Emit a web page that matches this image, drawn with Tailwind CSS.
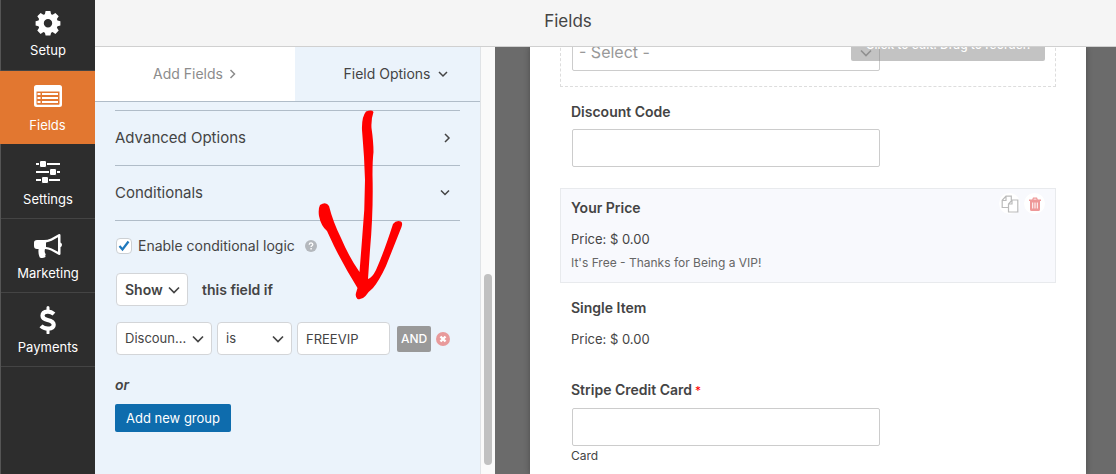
<!DOCTYPE html>
<html lang="en">
<head>
<meta charset="utf-8">
<meta name="viewport" content="width=device-width, initial-scale=1">
<title>Form Builder</title>
<script src="https://cdn.jsdelivr.net/npm/@tailwindcss/browser@4"></script>
</head>
<body class="flex h-screen overflow-hidden bg-[#f5f5f5] font-[Inter,sans-serif] text-sm text-[#444444]">

<!-- Main navigation -->
<nav class="flex w-[95px] shrink-0 flex-col border-l border-[#555555] bg-[#2d2d2d] text-[13px] leading-5 text-white" aria-label="Builder">
  <a href="#" class="flex h-[71px] flex-col items-center justify-end gap-[3px] border-b border-[#444444] pb-[10px]">
    <svg class="size-7" viewBox="0 0 28 28" fill="currentColor" aria-hidden="true"><path fill-rule="evenodd" d="M11.600 2h4.800l.7 3.200 1.500.6 2.800-1.800 3.300 3.300-1.800 2.800.6 1.500 2.900.7v4.300l-2.900.7-.6 1.500 1.800 2.800-3.300 3.300-2.800-1.800-1.500.6-.7 2.800h-4.800l-.7-2.800-1.500-.6-2.800 1.800-3.300-3.300 1.800-2.800-.6-1.500-2.900-.7v-4.300l2.900-.7.6-1.500-1.800-2.800 3.300-3.300 2.800 1.800 1.500-.6zM14 10a4.200 4.200 0 1 0 0 8.400a4.200 4.200 0 0 0 0-8.400z"/></svg>
    Setup
  </a>
  <a href="#" aria-current="page" class="-ml-px flex h-[73px] flex-col items-center justify-end gap-[3px] bg-[#e27730] pb-[9px]">
    <svg class="size-8" viewBox="0 0 32 32" fill="currentColor" aria-hidden="true"><path fill-rule="evenodd" d="M4.500 5h23q2.500 0 2.500 2.500v17q0 2.500-2.500 2.500h-23Q2 27 2 24.500v-17Q2 5 4.500 5zM4.500 11.500v12.500q0 .8.8.8h21.400q.8 0 .8-.8V11.500z"/><path d="M5.500 13h3v2h-3zM10 13h16v2H10zM5.500 17h3v2h-3zM10 17h16v2H10zM5.500 21h3v2h-3zM10 21h16v2H10z"/></svg>
    Fields
  </a>
  <a href="#" class="flex h-[75px] flex-col items-center justify-end gap-[3px] border-b border-[#444444] pb-[9px]">
    <svg class="size-7" viewBox="0 0 28 28" fill="currentColor" aria-hidden="true"><path d="M2 5h24v2H2zM2 13h24v2H2zM2 21h24v2H2z"/><g stroke="#2d2d2d"><rect x="5.500" y="2.500" width="7" height="7" rx="1.500"/><rect x="15.500" y="10.500" width="7" height="7" rx="1.500"/><rect x="7.500" y="18.500" width="7" height="7" rx="1.500"/></g></svg>
    Settings
  </a>
  <a href="#" class="flex h-[74px] flex-col items-center justify-end gap-[3px] border-b border-[#444444] pb-[9px]">
    <svg class="h-7 w-8" viewBox="0 0 32 28" fill="currentColor" aria-hidden="true"><path fill-rule="evenodd" d="M27 2q1.500-.2 1.500 1.200v7.200q1.500.8 1.500 2.400t-1.500 2.400v6.600q0 1.400-1.500 1.200l-8-4.500q-3-1.200-6-1.400-.8 2.800.3 4.500.8 1.300-.2 2 .8.900-.1 1.700-2.500 1.400-5.200.2-1.900-4.200-1.200-8.400H5q-3 0-3-3v-3.300Q2 8 5 8h7q3.500 0 7-1.600zM26 5.200l-6.300 3.500q-3 1.400-5.700 1.700v4.600q2.800.2 5.700 1.500l6.300 3.300z"/></svg>
    Marketing
  </a>
  <a href="#" class="flex h-[74px] flex-col items-center justify-end gap-[3px] border-b border-[#444444] pb-[9px]">
    <svg class="size-7" viewBox="0 0 28 28" fill="none" stroke="currentColor" aria-hidden="true"><path stroke-width="3" stroke-linecap="round" d="M14 1.500v4M14 23v4"/><path stroke-width="4.200" d="M20 8q-3-2.500-6.500-2.300-5 .3-5 4.100 0 3 5 4.200 6.200 1.400 6.200 4.800 0 3.700-5.500 3.900-4.400.1-7.200-2.800"/></svg>
    Payments
  </a>
</nav>

<div class="flex min-w-0 flex-1 flex-col">
  <header class="flex h-[47px] shrink-0 items-center justify-center border-b border-[#d0d0d0] pr-[75px] pb-1">
    <h1 class="text-[17px] leading-6">Fields</h1>
  </header>

  <div class="flex min-h-0 flex-1">
    <!-- Field options panel -->
    <section class="relative flex w-[400px] shrink-0 bg-[#fafafa]" aria-label="Field options">
      <div class="min-w-0 flex-1 border-r border-[#e0e3e6] bg-[#ebf3fb]">
        <div class="flex h-[55px] border-b border-[#b0bcc8]">
          <button type="button" class="flex w-[200px] items-center justify-center gap-[6px] bg-white text-[#8c8c8c]">Add Fields
            <svg class="h-3 w-2" viewBox="0 0 8 12" fill="none" stroke="currentColor" stroke-width="1.500" aria-hidden="true"><path d="M1.500 2l4 4-4 4"/></svg>
          </button>
          <button type="button" class="flex flex-1 items-center justify-center gap-[7px] pl-4">Field Options
            <svg class="h-3 w-[10px]" viewBox="0 0 10 12" fill="none" stroke="currentColor" stroke-width="1.500" aria-hidden="true"><path d="M1 4l4 4 4-4"/></svg>
          </button>
        </div>

        <div class="px-5 pt-2">
          <button type="button" class="flex h-[55px] w-full items-center justify-between border-t border-[#b0bcc8] pr-2 text-[15px]">Advanced Options
            <svg class="h-3 w-[10px]" viewBox="0 0 10 12" fill="none" stroke="currentColor" stroke-width="1.500" aria-hidden="true"><path d="M3 2l4 4-4 4"/></svg>
          </button>
          <button type="button" class="flex h-14 w-full items-center justify-between border-y border-[#b0bcc8] pr-[10px] text-[15px]">Conditionals
            <svg class="h-3 w-[10px]" viewBox="0 0 10 12" fill="none" stroke="currentColor" stroke-width="1.500" aria-hidden="true"><path d="M1 3.500l4 4 4-4"/></svg>
          </button>

          <div class="mt-[15px] flex h-5 items-center pl-px">
            <span class="relative flex">
              <input id="enable" type="checkbox" checked class="peer size-4 appearance-none rounded-sm border border-[#ccd0d4] bg-white">
              <svg class="pointer-events-none absolute inset-0 size-4 opacity-0 peer-checked:opacity-100" viewBox="0 0 16 16" fill="none" stroke="#2079bd" stroke-width="2.200" aria-hidden="true"><path d="M3.500 8l3 3.500 6-8"/></svg>
            </span>
            <label for="enable" class="ml-[6px]">Enable conditional logic</label>
            <button type="button" aria-label="Help" class="ml-[10px]">
              <svg class="size-3" viewBox="0 0 12 12" aria-hidden="true"><circle cx="6" cy="6" r="6" fill="#b4b8bd"/><path d="M4.200 4.700q.1-1.800 1.900-1.800 1.700.1 1.700 1.600 0 .8-.9 1.300-.8.400-.8 1.200" fill="none" stroke="#fff" stroke-width="1.300"/><path d="M5.400 8h1.400v1.400H5.400z" fill="#fff"/></svg>
            </button>
          </div>

          <div class="mt-[17px] flex items-center pl-px font-semibold">
            <span class="relative flex">
              <select aria-label="Conditional action" class="h-[33px] w-[72px] appearance-none rounded-sm border border-[#d3d5d8] bg-white pl-2"><option>Show</option></select>
              <svg class="pointer-events-none absolute top-[11px] right-2 h-3 w-3" viewBox="0 0 12 12" fill="none" stroke="currentColor" stroke-width="1.700" aria-hidden="true"><path d="M1 3.500l5 5 5-5"/></svg>
            </span>
            <span class="ml-[14px]">this field if</span>
          </div>

          <div class="mt-4 flex items-center pl-px text-[13px]">
            <span class="relative flex">
              <select aria-label="Field" class="h-[33px] w-24 appearance-none rounded-sm border border-[#d3d5d8] bg-white pl-2"><option>Discoun...</option></select>
              <svg class="pointer-events-none absolute top-[11px] right-2 h-3 w-3" viewBox="0 0 12 12" fill="none" stroke="currentColor" stroke-width="1.700" aria-hidden="true"><path d="M1 3.500l5 5 5-5"/></svg>
            </span>
            <span class="relative ml-[5px] flex">
              <select aria-label="Operator" class="h-[33px] w-[75px] appearance-none rounded-sm border border-[#d3d5d8] bg-white pl-2"><option>is</option></select>
              <svg class="pointer-events-none absolute top-[11px] right-2 h-3 w-3" viewBox="0 0 12 12" fill="none" stroke="currentColor" stroke-width="1.700" aria-hidden="true"><path d="M1 3.500l5 5 5-5"/></svg>
            </span>
            <input aria-label="Value" type="text" value="FREEVIP" class="ml-[5px] h-[33px] w-[93px] rounded-sm border border-[#d3d5d8] bg-white px-2">
            <button type="button" class="ml-[7px] h-[26px] w-[34px] rounded-xs bg-[#999999] text-xs font-medium text-white">AND</button>
            <button type="button" aria-label="Remove rule" class="ml-[5px]">
              <svg class="size-[14px]" viewBox="0 0 14 14" aria-hidden="true"><circle cx="7" cy="7" r="7" fill="#e89a9b"/><path d="M4.500 4.500l5 5M9.500 4.500l-5 5" stroke="#fff" stroke-width="2.400"/></svg>
            </button>
          </div>

          <p class="mt-5 leading-5 font-semibold italic">or</p>
          <button type="button" class="mt-[9px] h-7 w-[116px] rounded-xs bg-[#0e6cad] text-[13px] text-white">Add new group</button>
        </div>
      </div>
      <!-- Scrollbar -->
      <div class="flex w-[14px] flex-col items-center justify-end pb-[9px]">
        <div class="h-[191px] w-2 rounded-full bg-[#c1c1c1]"></div>
      </div>

      <!-- Hand-drawn arrow pointing at the rule value -->
      <svg class="pointer-events-none absolute top-[60px] left-[220px] h-[200px] w-[95px]" viewBox="315 107 95 200" fill="#ff0000" aria-hidden="true">
        <path d="M366 111.500Q372 109.500 373.500 112Q371 119 371.500 128Q373.500 142 373.500 152Q372.500 160 372.500 175Q373.500 210 370 250L368 279Q372 278 376 270Q384 252 393 224Q396 220 401 221.500Q403 223 401.500 227Q394 246 386 266Q379 281 373 288Q368 292 365.500 296Q362 300 357.500 299Q355 297 356 293L357.500 288Q345 268 334 246L327 231Q321 226 319 216Q318 209 320 205Q326 201 329 206Q333 222 341 238Q349 257 359.500 272L362 240Q365 210 365 180L364 157Q363 143 362 130Q361.500 117 366 111.500z"/>
      </svg>
    </section>

    <!-- Form preview -->
    <main class="min-w-0 flex-1 overflow-hidden bg-[#6b6b6b] pr-[30px] pl-[35px]">
      <div class="h-full overflow-hidden bg-white px-[30px] shadow-[0_0_6px_rgba(0,0,0,0.3)]">
        <div class="relative -mt-[25px] border border-dashed border-[#dddddd] px-[11px] pt-[9px] pb-[15px]">
          <div class="relative w-[308px] max-w-full text-[#999999]">
            <select aria-label="Select item" class="block h-[39px] w-full appearance-none rounded-xs border border-[#cccccc] bg-white pl-[6px] text-base"><option>- Select -</option></select>
            <svg class="pointer-events-none absolute top-[15px] right-2 h-3 w-3" viewBox="0 0 12 12" fill="none" stroke="currentColor" stroke-width="1.700" aria-hidden="true"><path d="M1 3.500l5 5 5-5"/></svg>
          </div>
          <span class="absolute top-[6px] right-[10px] flex h-8 w-[194px] items-center justify-center rounded-xs bg-[#888888]/50 text-xs font-medium text-white">Click to edit. Drag to reorder.</span>
        </div>

        <div class="px-[11px] pt-[15px]">
          <label for="discount" class="block leading-5 font-semibold">Discount Code</label>
          <input id="discount" type="text" class="mt-[7px] ml-px block h-[38px] w-[308px] max-w-full rounded-xs border border-[#cccccc]">
        </div>

        <section class="relative mt-[21px] h-[95px] border border-[#e8eaed] bg-[#f8f9fd] px-[10px] pt-[9px]">
          <h2 class="leading-5 font-semibold">Your Price</h2>
          <p class="mt-[11px] text-[13px] leading-5">Price: $ 0.00</p>
          <p class="mt-1 text-xs leading-5 text-[#666666]">It's Free - Thanks for Being a VIP!</p>
          <div class="absolute top-1 right-[10px] flex gap-1">
            <button type="button" aria-label="Duplicate field" class="flex size-[21px] items-center justify-center rounded-full bg-white">
              <svg class="size-[18px] shrink-0" viewBox="0 0 18 18" fill="none" stroke="#bbbbbb" stroke-width="1.200" aria-hidden="true"><path d="M7 12.500H1.200V5.300L5 1.200h5.300v4M1.200 5.500H5V1.200M11 5h5.800v12H7.500V9zM7.500 9H11V5"/></svg>
            </button>
            <button type="button" aria-label="Delete field" class="flex size-[21px] items-center justify-center rounded-full bg-white">
              <svg class="size-[14px] shrink-0" viewBox="0 0 14 14" aria-hidden="true"><path fill="#ee9898" fill-rule="evenodd" d="M1 2.500h3.200L5 .6h4l.8 1.900H13V4h-1v8.500q0 1.500-1.500 1.500h-7Q2 14 2 12.500V4H1zM5.500 2.500h3L8.200 1.700H5.800zM4.200 5.500v6h1v-6zm2.300 0v6h1v-6zm2.300 0v6h1v-6z"/></svg>
            </button>
          </div>
        </section>

        <section class="px-[11px] pt-[15px]">
          <h2 class="leading-5 font-semibold">Single Item</h2>
          <p class="mt-[11px] text-[13px] leading-5">Price: $ 0.00</p>
        </section>

        <div class="px-[11px] pt-[31px]">
          <label for="card" class="block leading-5 font-semibold">Stripe Credit Card<span class="ml-[3px] text-xs font-normal text-[#ff0000]">*</span></label>
          <input id="card" type="text" class="mt-2 ml-px block h-[38px] w-[308px] max-w-full rounded-xs border border-[#cccccc]">
          <p class="text-xs leading-5">Card</p>
        </div>
      </div>
    </main>
  </div>
</div>
</body>
</html>
